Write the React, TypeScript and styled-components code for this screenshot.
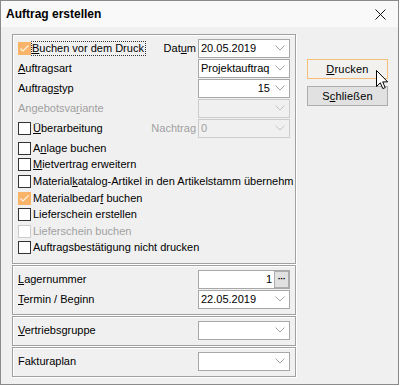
import styled, { createGlobalStyle } from "styled-components";

const GlobalStyle = createGlobalStyle`
  html, body {
    margin: 0;
    padding: 0;
    background: #ffffff;
  }
  body {
    font-family: "Liberation Sans", Arial, sans-serif;
    font-size: 11px;
    color: #000;
  }
`;

const Window = styled.div`
  position: relative;
  width: 399px;
  height: 385px;
  box-sizing: border-box;
  border: 1px solid #8a8a8a;
  background: #f0f0f0;
  display: flex;
  flex-direction: column;
`;

const TitleBar = styled.div`
  height: 26px;
  flex: none;
  background: #f9f9f9;
  display: flex;
  align-items: center;
  justify-content: space-between;
  padding-left: 5px;
  font-size: 12px;
  font-weight: bold;
`;

const CloseButton = styled.div`
  width: 46px;
  height: 26px;
  display: flex;
  align-items: center;
  justify-content: center;
  margin-right: -5px;
  svg {
    width: 11px;
    height: 11px;
  }
`;

const Body = styled.div`
  display: flex;
  padding: 7px 0 0 11px;
  gap: 11px;
`;

const LeftCol = styled.div`
  width: 284px;
  display: flex;
  flex-direction: column;
  gap: 1px;
`;

const Group = styled.div<{ $height: number }>`
  box-sizing: border-box;
  height: ${(p) => p.$height}px;
  border: 1px solid #a0a0a0;
  box-shadow: inset 1px 1px 0 #ffffff, 1px 1px 0 #ffffff;
  padding: 3px 5px 0 5px;
  overflow: hidden;
  display: flex;
  flex-direction: column;
`;

const Row = styled.div`
  height: 20px;
  display: flex;
  align-items: center;
  white-space: nowrap;
`;

const CheckRow = styled.div<{ $first?: boolean }>`
  height: 16.6px;
  margin-top: ${(p) => (p.$first ? 2 : 0)}px;
  display: flex;
  align-items: center;
  white-space: nowrap;
`;

const Label = styled.span<{ $disabled?: boolean }>`
  flex: 1;
  color: ${(p) => (p.$disabled ? "#a0a0a0" : "#000")};
`;

const SideLabel = styled.span<{ $disabled?: boolean }>`
  margin-right: 2px;
  color: ${(p) => (p.$disabled ? "#a0a0a0" : "#000")};
`;

const Key = styled.span`
  text-decoration: underline;
`;

const Box = styled.span<{ $checked?: boolean; $disabled?: boolean }>`
  flex: none;
  box-sizing: border-box;
  width: 13px;
  height: 13px;
  margin-right: 2px;
  border: 1px solid
    ${(p) => (p.$checked ? "#f9b46a" : p.$disabled ? "#cccccc" : "#333333")};
  background: ${(p) => (p.$checked ? "#f9b46a" : "#ffffff")};
  display: flex;
  align-items: center;
  justify-content: center;
  svg {
    width: 11px;
    height: 11px;
  }
`;

const CheckText = styled.span<{ $disabled?: boolean; $focus?: boolean }>`
  color: ${(p) => (p.$disabled ? "#a0a0a0" : "#000")};
  outline: ${(p) => (p.$focus ? "1px dotted #333" : "none")};
  line-height: 13px;
  padding: ${(p) => (p.$focus ? "0 1px 0 0" : "0")};
  margin-left: ${(p) => (p.$focus ? "-1px" : "0")};
`;

const Spacer = styled.span`
  flex: 1;
`;

const Field = styled.div<{ $disabled?: boolean }>`
  flex: none;
  box-sizing: border-box;
  width: 92px;
  height: 19px;
  border: 1px solid ${(p) => (p.$disabled ? "#cccccc" : "#a8a8a8")};
  background: ${(p) => (p.$disabled ? "#f0f0f0" : "#ffffff")};
  color: ${(p) => (p.$disabled ? "#a0a0a0" : "#000")};
  display: flex;
  align-items: center;
  padding-left: 2px;
`;

const Value = styled.span<{ $right?: boolean }>`
  flex: 1;
  text-align: ${(p) => (p.$right ? "right" : "left")};
  padding-right: ${(p) => (p.$right ? 2 : 0)}px;
`;

const Chevron = styled.svg`
  flex: none;
  width: 10px;
  height: 6px;
  margin: 0 4px 0 3px;
`;

const DotsButton = styled.span`
  flex: none;
  box-sizing: border-box;
  width: 15px;
  height: 17px;
  border: 1px solid #adadad;
  background: #e1e1e1;
  display: flex;
  align-items: center;
  justify-content: center;
  font-weight: bold;
  font-size: 9px;
  line-height: 1;
  letter-spacing: -0.5px;
`;

const RightCol = styled.div`
  display: flex;
  flex-direction: column;
  gap: 7px;
  padding-top: 25px;
`;

const Button = styled.div<{ $default?: boolean }>`
  box-sizing: border-box;
  width: 81px;
  height: 20px;
  border: 1px solid ${(p) => (p.$default ? "#f7bd7b" : "#adadad")};
  background: ${(p) => (p.$default ? "#f3f1ee" : "#e1e1e1")};
  display: flex;
  align-items: center;
  justify-content: center;
  letter-spacing: 0.2px;
`;

const Cursor = styled.svg`
  position: absolute;
  left: 375px;
  top: 69px;
  width: 13px;
  height: 20px;
`;

const Chev = ({ disabled }: { disabled?: boolean }) => (
  <Chevron viewBox="0 0 10 6">
    <polyline
      points="0.5,0.5 5,5 9.5,0.5"
      fill="none"
      stroke={disabled ? "#c4c4c4" : "#a6a6a6"}
      strokeWidth={1}
    />
  </Chevron>
);

const Check = ({
  checked,
  disabled,
}: {
  checked?: boolean;
  disabled?: boolean;
}) => (
  <Box $checked={checked} $disabled={disabled}>
    {checked ? (
      <svg viewBox="0 0 11 11">
        <polyline
          points="1.5,5.5 4,8 9.5,2.5"
          fill="none"
          stroke="#fff3e4"
          strokeWidth={1.2}
        />
      </svg>
    ) : null}
  </Box>
);

const checks: {
  pre: string;
  key?: string;
  post: string;
  checked?: boolean;
  disabled?: boolean;
}[] = [
  { pre: "A", key: "n", post: "lage buchen" },
  { pre: "", key: "M", post: "ietvertrag erweitern" },
  { pre: "Material", key: "k", post: "atalog-Artikel in den Artikelstamm übernehm" },
  { pre: "Materialbedar", key: "f", post: " buchen", checked: true },
  { pre: "Lieferschein erstellen", post: "" },
  { pre: "Lieferschein buchen", post: "", disabled: true },
  { pre: "Auftragsbestätigung nicht drucken", post: "" },
];

const App = () => {
  return (
    <>
      <GlobalStyle />
      <Window>
        <TitleBar>
          Auftrag erstellen
          <CloseButton>
            <svg viewBox="0 0 11 11">
              <path d="M0.5 0.5L10.5 10.5M10.5 0.5L0.5 10.5" stroke="#111" strokeWidth={1} />
            </svg>
          </CloseButton>
        </TitleBar>
        <Body>
          <LeftCol>
            <Group $height={230}>
              <Row>
                <Check checked />
                <CheckText $focus>
                  <Key>B</Key>uchen vor dem Druck
                </CheckText>
                <Spacer />
                <SideLabel>
                  Dat<Key>u</Key>m
                </SideLabel>
                <Field>
                  <Value>20.05.2019</Value>
                  <Chev />
                </Field>
              </Row>
              <Row>
                <Label>
                  <Key>A</Key>uftragsart
                </Label>
                <Field>
                  <Value>Projektauftraq</Value>
                  <Chev />
                </Field>
              </Row>
              <Row>
                <Label>
                  Auftrag<Key>s</Key>typ
                </Label>
                <Field>
                  <Value $right>15</Value>
                  <Chev />
                </Field>
              </Row>
              <Row>
                <Label $disabled>
                  Angebotsva<Key>r</Key>iante
                </Label>
                <Field $disabled>
                  <Value />
                  <Chev disabled />
                </Field>
              </Row>
              <Row>
                <Check />
                <CheckText>
                  <Key>Ü</Key>berarbeitung
                </CheckText>
                <Spacer />
                <SideLabel $disabled>Nachtrag</SideLabel>
                <Field $disabled>
                  <Value>0</Value>
                  <Chev disabled />
                </Field>
              </Row>
              {checks.map((c, i) => (
                <CheckRow key={i} $first={i === 0}>
                  <Check checked={c.checked} disabled={c.disabled} />
                  <CheckText $disabled={c.disabled}>
                    {c.pre}
                    {c.key ? <Key>{c.key}</Key> : null}
                    {c.post}
                  </CheckText>
                </CheckRow>
              ))}
            </Group>
            <Group $height={50}>
              <Row>
                <Label>
                  <Key>L</Key>agernummer
                </Label>
                <Field>
                  <Value $right>1</Value>
                  <DotsButton>···</DotsButton>
                </Field>
              </Row>
              <Row>
                <Label>
                  <Key>T</Key>ermin / Beginn
                </Label>
                <Field>
                  <Value>22.05.2019</Value>
                  <Chev />
                </Field>
              </Row>
            </Group>
            <Group $height={30}>
              <Row>
                <Label>
                  <Key>V</Key>ertriebsgruppe
                </Label>
                <Field>
                  <Value />
                  <Chev />
                </Field>
              </Row>
            </Group>
            <Group $height={30}>
              <Row>
                <Label>Fakturaplan</Label>
                <Field>
                  <Value />
                  <Chev />
                </Field>
              </Row>
            </Group>
          </LeftCol>
          <RightCol>
            <Button $default>
              <span>
                <Key>D</Key>rucken
              </span>
            </Button>
            <Button>
              <span>
                S<Key>c</Key>hließen
              </span>
            </Button>
          </RightCol>
        </Body>
        <Cursor viewBox="0 0 13 20">
          <path
            d="M0.5 0.5 L0.5 16.5 L4.3 12.8 L6.8 18.6 L9.2 17.6 L6.7 11.9 L11.7 11.9 Z"
            fill="#ffffff"
            stroke="#000000"
            strokeWidth={1}
            strokeLinejoin="miter"
          />
        </Cursor>
      </Window>
    </>
  );
};

export default App;
